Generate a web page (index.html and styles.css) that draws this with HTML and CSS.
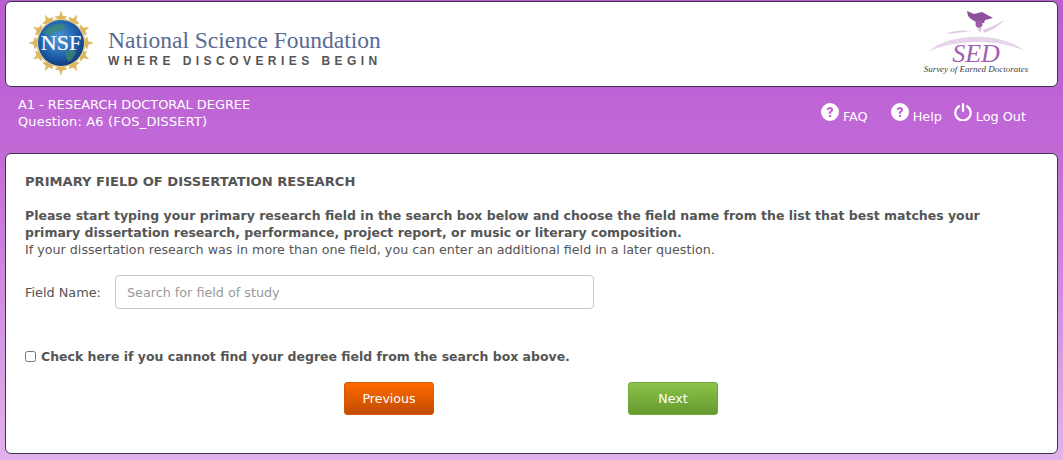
FILE: index.html
```html
<!DOCTYPE html>
<html lang="en">
<head>
<meta charset="utf-8">
<title>Survey of Earned Doctorates</title>
<link rel="stylesheet" href="styles.css">
</head>
<body>
<header class="brand-card">
  <div class="nsf">
    <svg class="nsf-seal" width="68" height="68" viewBox="0 0 68 68" aria-hidden="true">
      <defs>
        <radialGradient id="globe" cx="45%" cy="40%" r="60%">
          <stop offset="0" stop-color="#4f9ad8"/>
          <stop offset=".65" stop-color="#1f62ad"/>
          <stop offset="1" stop-color="#123a7d"/>
        </radialGradient>
      </defs>
      <g fill="#dcb85a" stroke="#c49a3a" stroke-width=".3">
        <path id="s" d="M34 2l1.500 5 4.500 .8-3.500 2.700 1 4.500-3.500-2.700-3.500 2.700 1-4.500-3.500-2.700 4.500-.8z"/>
        <use href="#s" transform="rotate(30 34 34)"/>
        <use href="#s" transform="rotate(60 34 34)"/>
        <use href="#s" transform="rotate(90 34 34)"/>
        <use href="#s" transform="rotate(120 34 34)"/>
        <use href="#s" transform="rotate(150 34 34)"/>
        <use href="#s" transform="rotate(180 34 34)"/>
        <use href="#s" transform="rotate(210 34 34)"/>
        <use href="#s" transform="rotate(240 34 34)"/>
        <use href="#s" transform="rotate(270 34 34)"/>
        <use href="#s" transform="rotate(300 34 34)"/>
        <use href="#s" transform="rotate(330 34 34)"/>
      </g>
      <circle cx="34" cy="34" r="24" fill="#f2e6c0" stroke="#d9b04a" stroke-width=".8"/>
      <circle cx="34" cy="34" r="23" fill="url(#globe)"/>
      <path d="M17 23c5-6 12-9 19-8l3 4-5 3-4-1-3 4-6 1zM38 43l7-3 4 3-4 8-4 2-2-5z" fill="#3f8a6e" opacity=".7"/>
      <text class="nsf-letters" x="34" y="41" text-anchor="middle">NSF</text>
    </svg>
    <div class="nsf-words">
      <div class="nsf-name">National Science Foundation</div>
      <div class="nsf-tag">WHERE DISCOVERIES BEGIN</div>
    </div>
  </div>
  <div class="sed">
    <svg class="sed-mark" width="108" height="46" viewBox="0 0 108 46" aria-hidden="true">
      <path d="M45 0l7 3 8-2 11 6-8 2-1 3-8-1-5-3-3-3z" fill="#8f4f9c"/>
      <ellipse cx="57" cy="13" rx="3.500" ry="3.700" fill="#9c5aa8"/>
      <path d="M55 17l3 5 2-5z" fill="#e0c6e4"/>
      <path d="M61 19c8-3 15-6 21-10-5 6-12 10-20 13zM26 22c8-3 17-3 24-2-8 1-16 2-24 3z" fill="#e3c8e6"/>
      <path d="M6 41C26 22 78 20 103 40 76 28 34 28 6 41z" fill="#e7d3ea"/>
    </svg>
    <div class="sed-name">SED</div>
    <div class="sed-full">Survey of Earned Doctorates</div>
  </div>
</header>

<div class="status-band">
  <div class="status-text">
    <div>A1 - RESEARCH DOCTORAL DEGREE</div>
    <div class="status-question">Question: A6 (FOS_DISSERT)</div>
  </div>
  <nav class="status-links">
    <a class="status-link link-faq" href="#">
      <svg class="glyph" width="18" height="18" viewBox="0 0 18 18" aria-hidden="true"><path fill="#fff" fill-rule="evenodd" d="M9 0a9 9 0 1 1 0 18A9 9 0 0 1 9 0zM5.600 6.600l2 .6c.2-.8.6-1.200 1.300-1.200.6 0 1 .3 1 .8 0 .5-.3.8-.9 1.200-1 .6-1.300 1.200-1.300 2.300v.4h2.100v-.3c0-.5.2-.8.8-1.200 1-.7 1.500-1.400 1.500-2.500C12.100 4.900 10.800 4 9 4 7.200 4 6 4.900 5.600 6.600zM7.900 12v2h2.200v-2z"/></svg>
      <span>FAQ</span>
    </a>
    <a class="status-link link-help" href="#">
      <svg class="glyph" width="18" height="18" viewBox="0 0 18 18" aria-hidden="true"><path fill="#fff" fill-rule="evenodd" d="M9 0a9 9 0 1 1 0 18A9 9 0 0 1 9 0zM5.600 6.600l2 .6c.2-.8.6-1.200 1.300-1.200.6 0 1 .3 1 .8 0 .5-.3.8-.9 1.200-1 .6-1.300 1.200-1.300 2.300v.4h2.100v-.3c0-.5.2-.8.8-1.200 1-.7 1.500-1.400 1.500-2.500C12.100 4.900 10.800 4 9 4 7.200 4 6 4.900 5.600 6.600zM7.900 12v2h2.200v-2z"/></svg>
      <span>Help</span>
    </a>
    <a class="status-link link-out" href="#">
      <svg class="glyph" width="18" height="18" viewBox="0 0 18 18" aria-hidden="true"><path fill="none" stroke="#fff" stroke-width="2.200" stroke-linecap="round" d="M5 3.200a7.700 7.700 0 1 0 8 0M9 1v7"/></svg>
      <span>Log Out</span>
    </a>
  </nav>
</div>

<main class="form-card">
  <h1 class="form-title">PRIMARY FIELD OF DISSERTATION RESEARCH</h1>
  <p class="lead"><strong>Please start typing your primary research field in the search box below and choose the field name from the list that best matches your primary dissertation research, performance, project report, or music or literary composition.</strong><br>If your dissertation research was in more than one field, you can enter an additional field in a later question.</p>
  <div class="field-row">
    <label class="field-label" for="fos">Field Name:</label>
    <input class="field-input" id="fos" type="text" placeholder="Search for field of study">
  </div>
  <label class="check-row"><input class="check-box" type="checkbox"><span>Check here if you cannot find your degree field from the search box above.</span></label>
  <div class="actions">
    <button class="btn btn-prev" type="button">Previous</button>
    <button class="btn btn-next" type="button">Next</button>
  </div>
</main>
</body>
</html>
```
FILE: styles.css
```css
* { box-sizing: border-box; }
html, body { height: 100%; }
body {
  margin: 0;
  padding: 1px 5px 0;
  height: 460px;
  overflow: hidden;
  background: linear-gradient(#b95dd0 0, #c067d6 135px, #c16ad4 150px, #e2b2ec 460px);
  font-family: "DejaVu Sans", Verdana, sans-serif;
  font-size: 12.700px;
  color: #555;
}
.brand-card {
  height: 86px;
  background: #fff;
  border: 1px solid #3a3650;
  border-radius: 6px;
  display: flex;
  justify-content: space-between;
  align-items: center;
  padding: 0 27px 0 21px;
}
.nsf { display: flex; align-items: center; gap: 13px; }
.nsf-seal { flex: none; margin-top: -2px; }
.nsf-letters { font-family: "Liberation Serif", serif; font-size: 22px; fill: #fff; stroke: #fff; stroke-width: .2; }
.nsf-words { width: 276px; padding-top: 6px; }
.nsf-name { font-family: "Liberation Serif", serif; font-size: 23.500px; line-height: 26px; color: #5b6a92; white-space: nowrap; }
.nsf-tag { margin-top: 1px; font-family: "Liberation Sans", sans-serif; font-size: 12px; line-height: 14px; font-weight: 700; letter-spacing: 4.450px; color: #555; white-space: nowrap; }
.sed { width: 108px; position: relative; height: 66px; }
.sed-mark { display: block; }
.sed-name { position: absolute; top: 34px; left: 0; width: 100%; text-align: center; font-family: "Liberation Serif", serif; font-style: italic; font-size: 26px; line-height: 18px; color: #a25fb0; }
.sed-full { position: absolute; top: 53px; left: 0; width: 100%; text-align: center; font-family: "Liberation Serif", serif; font-style: italic; font-size: 9px; line-height: 10px; color: #3f3f3f; white-space: nowrap; }

.status-band {
  height: 48px;
  margin: 0 -5px;
  padding: 9px 37px 0 18px;
  display: flex;
  justify-content: space-between;
  align-items: flex-start;
  background: linear-gradient(#bd62d4, #c169d8);
  color: #fff;
  font-size: 12.900px;
  line-height: 17px;
}
.status-question { letter-spacing: .22px; }
.status-links { display: flex; padding-top: 7px; }
.status-link { display: flex; align-items: flex-start; gap: 4px; color: #fff; text-decoration: none; font-size: 12.800px; }
.status-link span { padding-top: 5px; }
.link-faq { margin-right: 23px; }
.link-help { margin-right: 12px; }
.glyph { flex: none; }

.form-card {
  height: 301px;
  margin-top: 18px;
  background: #fff;
  border: 1px solid #3a3650;
  border-radius: 6px;
  padding: 19px 19px 0;
}
.form-title { margin: 0 0 17px; font-size: 13.100px; line-height: 17px; font-weight: 700; color: #555; }
.lead { margin: 0; font-size: 12.700px; line-height: 17px; }
.lead strong { font-size: 12.500px; }
.field-row { display: flex; align-items: center; gap: 14px; margin-top: 17px; }
.field-label { font-size: 12.850px; }
.field-input {
  width: 479px;
  height: 34px;
  border: 1px solid #c8c8c8;
  border-radius: 4px;
  padding: 0 11px;
  font-family: inherit;
  font-size: 12.750px;
  color: #555;
  background: #fff;
}
.field-input::placeholder { color: #9a9a9a; opacity: 1; }
.check-row { display: flex; align-items: center; gap: 5px; margin-top: 39px; font-weight: 700; font-size: 12.480px; line-height: 17px; }
.check-box { margin: 0; width: 11px; height: 11px; flex: none; }
.actions { display: flex; gap: 194px; margin-top: 17px; padding-left: 319px; }
.btn {
  width: 90px;
  height: 33px;
  border-radius: 3px;
  color: #fff;
  font-family: inherit;
  font-size: 12.600px;
  padding: 0;
}
.btn-prev { background: linear-gradient(#ff6a00, #c24c00); border: 1px solid #d45a08; }
.btn-next { background: linear-gradient(#8bc34a, #659a2f); border: 1px solid #72a63a; }
```
